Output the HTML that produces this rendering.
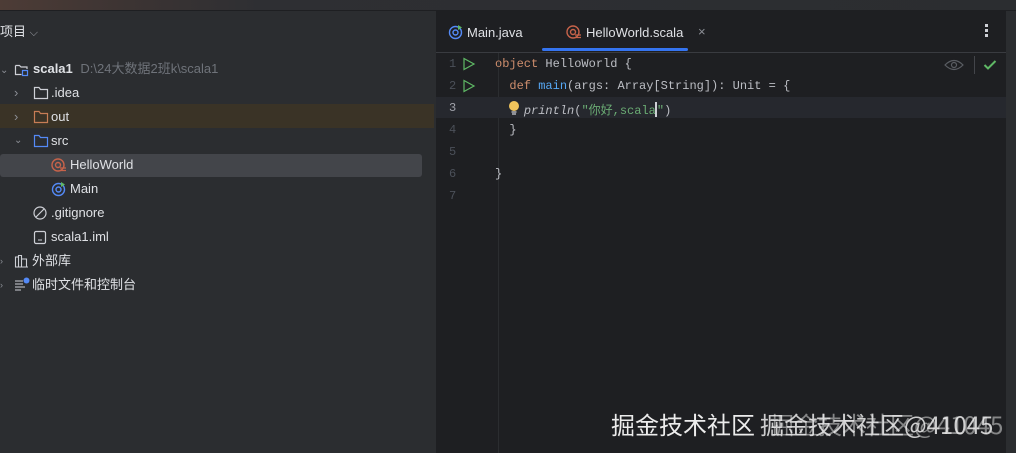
<!DOCTYPE html>
<html><head><meta charset="utf-8"><style>
*{margin:0;padding:0;box-sizing:border-box}
body{width:1016px;height:453px;overflow:hidden;background:#2b2d30;position:relative;font-family:"Liberation Sans","Noto Sans CJK SC",sans-serif;color:#dfe1e5;font-size:13px}
.abs{position:absolute}
.top{left:0;top:0;width:1016px;height:11px;background:linear-gradient(90deg,#4d3c36 0,#3d3433 120px,#2e2f33 260px,#2b2d30 100%);border-bottom:1px solid #1e1f22}
.left{left:0;top:11px;width:436px;height:442px;background:#2b2d30}
.ed{left:436px;top:11px;width:570px;height:442px;background:#1e1f22;border-left:1px solid #1e1f22}
.rs{left:1006px;top:11px;width:10px;height:442px;background:#2b2d30}
.row{position:absolute;left:0;height:24px;line-height:24px;white-space:nowrap}
.mono{font-family:"Liberation Mono","Noto Sans CJK SC",monospace;font-size:12px;white-space:pre}
.ln{position:absolute;left:449px;color:#4b5059;font-family:"Liberation Mono",monospace;font-size:12px}
.cl{position:absolute;left:495px}
.wm{position:absolute;top:406px;font-size:24px;color:#ececec;font-family:'Noto Sans CJK SC',sans-serif;white-space:nowrap}
</style></head><body>
<div class="abs top"></div>
<div class="abs left"></div>
<div class="abs ed"></div>
<div class="abs rs"></div>

<div class="row" style="top:20px;left:0">项目 <span style="color:#9da0a8;font-size:11px">⌵</span></div>
<div class="abs" style="left:0;top:104px;width:434px;height:24px;background:#3a3326"></div>
<div class="abs" style="left:0;top:154px;width:422px;height:23px;background:#43454a;border-radius:3px"></div>

<div class="row" style="top:57px;left:0"><span style="color:#8c8f96;font-size:10px">⌄</span></div>
<svg class="abs" style="left:14px;top:62px" width="16" height="16" viewBox="0 0 16 16" fill="none" stroke="#ced0d6" stroke-width="1.2"><path d="M1.5 3.5h4l1.5 1.5h6v2M1.5 3.5v9h6"/><rect x="8.5" y="8.5" width="5" height="5" stroke="#548af7"/></svg>
<div class="row" style="top:57px;left:33px"><b>scala1</b> <span style="color:#6f737a;margin-left:4px">D:\24大数据2班k\scala1</span></div>

<div class="row" style="top:81px;left:14px;color:#8c8f96">›</div>
<svg class="abs" style="left:33px;top:86px" width="16" height="14"><path d="M1.5 1.5h4.5l1.5 2h7v9h-13z" fill="none" stroke="#ced0d6" stroke-width="1.2"/></svg>
<div class="row" style="top:81px;left:51px">.idea</div>

<div class="row" style="top:105px;left:14px;color:#8c8f96">›</div>
<svg class="abs" style="left:33px;top:110px" width="16" height="14"><path d="M1.5 1.5h4.5l1.5 2h7v9h-13z" fill="none" stroke="#c77d55" stroke-width="1.2"/></svg>
<div class="row" style="top:105px;left:51px">out</div>

<div class="row" style="top:129px;left:14px;color:#8c8f96;font-size:10px">⌄</div>
<svg class="abs" style="left:33px;top:134px" width="16" height="14"><path d="M1.5 1.5h4.5l1.5 2h7v9h-13z" fill="none" stroke="#548af7" stroke-width="1.2"/></svg>
<div class="row" style="top:129px;left:51px">src</div>

<svg class="abs" style="left:51px;top:157px" width="16" height="16"><circle cx="7" cy="8" r="6" fill="none" stroke="#c7634a" stroke-width="1.4"/><circle cx="7" cy="8" r="2.5" fill="none" stroke="#c7634a" stroke-width="1.4"/><path d="M9 11h6M9 13.5h6" stroke="#c7634a" stroke-width="1.2"/></svg>
<div class="row" style="top:153px;left:70px">HelloWorld</div>

<svg class="abs" style="left:51px;top:181px" width="16" height="16"><circle cx="7.5" cy="8.5" r="6" fill="none" stroke="#548af7" stroke-width="1.4"/><circle cx="7.5" cy="8.5" r="2.5" fill="none" stroke="#548af7" stroke-width="1.4"/><path d="M10 1l4 2.5-4 2.5z" fill="#5fb865"/></svg>
<div class="row" style="top:177px;left:70px">Main</div>

<svg class="abs" style="left:33px;top:206px" width="15" height="15"><circle cx="7" cy="7" r="6" fill="none" stroke="#ced0d6" stroke-width="1.2"/><path d="M3 11L11 3" stroke="#ced0d6" stroke-width="1.2"/></svg>
<div class="row" style="top:201px;left:51px">.gitignore</div>

<svg class="abs" style="left:33px;top:230px" width="14" height="15"><rect x="1.5" y="1.5" width="11" height="12" rx="1.5" fill="none" stroke="#ced0d6" stroke-width="1.2"/><path d="M5 10h4" stroke="#ced0d6"/></svg>
<div class="row" style="top:225px;left:51px">scala1.iml</div>

<div class="row" style="top:249px;left:0;color:#8c8f96;font-size:9px">›</div>
<svg class="abs" style="left:14px;top:254px" width="15" height="14"><path d="M1.5 13V3h3v10M4.5 13V1.5h3V13M7.5 13V5h5v8M1 13h13" fill="none" stroke="#ced0d6" stroke-width="1.1"/></svg>
<div class="row" style="top:249px;left:32px">外部库</div>

<div class="row" style="top:273px;left:0;color:#8c8f96;font-size:9px">›</div>
<svg class="abs" style="left:14px;top:277px" width="16" height="14"><path d="M1 4h8M1 7h8M1 10h10M1 13h6" stroke="#ced0d6" stroke-width="1.1"/><circle cx="12.5" cy="3.5" r="3" fill="#548af7"/></svg>
<div class="row" style="top:273px;left:32px">临时文件和控制台</div>

<div class="abs" style="left:436px;top:52px;width:570px;height:1px;background:#393b40"></div>
<svg class="abs" style="left:448px;top:24px" width="16" height="16"><circle cx="7.5" cy="8.5" r="6" fill="none" stroke="#548af7" stroke-width="1.4"/><circle cx="7.5" cy="8.5" r="2.5" fill="none" stroke="#548af7" stroke-width="1.4"/><path d="M10 1l4 2.5-4 2.5z" fill="#5fb865"/></svg>
<div class="abs" style="left:467px;top:25px;line-height:16px">Main.java</div>
<svg class="abs" style="left:566px;top:24px" width="16" height="16"><circle cx="7" cy="8" r="6" fill="none" stroke="#c7634a" stroke-width="1.4"/><circle cx="7" cy="8" r="2.5" fill="none" stroke="#c7634a" stroke-width="1.4"/><path d="M9 11h6M9 13.5h6" stroke="#c7634a" stroke-width="1.2"/></svg>
<div class="abs" style="left:586px;top:25px;line-height:16px">HelloWorld.scala</div>
<div class="abs" style="left:698px;top:24px;color:#8c8f96;font-size:13px">×</div>
<div class="abs" style="left:542px;top:48px;width:146px;height:3px;background:#3574f0;border-radius:2px"></div>
<div class="abs" style="left:985px;top:24px;width:3px;height:3px;background:#ced0d6;box-shadow:0 5px #ced0d6,0 10px #ced0d6"></div>

<div class="abs" style="left:498px;top:53px;width:1px;height:400px;background:#2b2d30"></div>
<div class="abs" style="left:436px;top:97px;width:570px;height:21px;background:#26282e"></div>
<svg class="abs" style="left:944px;top:58px" width="20" height="14"><path d="M1 7Q10 -2 19 7Q10 16 1 7z" fill="none" stroke="#5a5d63" stroke-width="1.2"/><circle cx="10" cy="7" r="2.5" fill="none" stroke="#5a5d63" stroke-width="1.2"/></svg>
<div class="abs" style="left:974px;top:56px;width:1px;height:18px;background:#43454a"></div>
<svg class="abs" style="left:983px;top:59px" width="14" height="12"><path d="M1.5 6l3.5 3.5L12.5 2" fill="none" stroke="#5fb865" stroke-width="2"/></svg>

<div class="ln" style="top:57px">1</div>
<div class="ln" style="top:79px">2</div>
<div class="ln" style="top:101px;color:#a1a3ab">3</div>
<div class="ln" style="top:123px">4</div>
<div class="ln" style="top:145px">5</div>
<div class="ln" style="top:167px">6</div>
<div class="ln" style="top:189px">7</div>
<svg class="abs" style="left:462px;top:57px" width="14" height="14"><path d="M2 1.5L12 7 2 12.5z" fill="none" stroke="#5fb865" stroke-width="1.2"/></svg>
<svg class="abs" style="left:462px;top:79px" width="14" height="14"><path d="M2 1.5L12 7 2 12.5z" fill="none" stroke="#5fb865" stroke-width="1.2"/></svg>
<svg class="abs" style="left:508px;top:100px" width="12" height="16"><circle cx="6" cy="6" r="5" fill="#f2c55c"/><path d="M3.5 12h5M4 14h4" stroke="#ced0d6" stroke-width="1.2"/></svg>

<div class="cl mono" style="top:57px"><span style="color:#cf8e6d">object</span> <span style="color:#bcbec4">HelloWorld {</span></div>
<div class="cl mono" style="top:79px;color:#bcbec4">  <span style="color:#cf8e6d">def</span> <span style="color:#56a8f5">main</span>(args: Array[String]): Unit = {</div>
<div class="cl mono" style="top:101px;color:#bcbec4">    <i>println</i>(<span style="color:#6aab73">"你好,scala</span><span style="display:inline-block;width:2px;height:15px;background:#ced0d6;vertical-align:-3px;margin-left:-1px"></span><span style="color:#6aab73">"</span>)</div>
<div class="cl mono" style="top:123px;color:#bcbec4">  }</div>
<div class="cl mono" style="top:167px;color:#bcbec4">}</div>

<div class="wm" style="left:611px">掘金技术社区</div>
<div class="wm" style="left:760px;opacity:.85">掘金技术社区@41045</div>
<div class="wm" style="left:770px;opacity:.5">掘金技术社区@41045</div>
</body></html>
